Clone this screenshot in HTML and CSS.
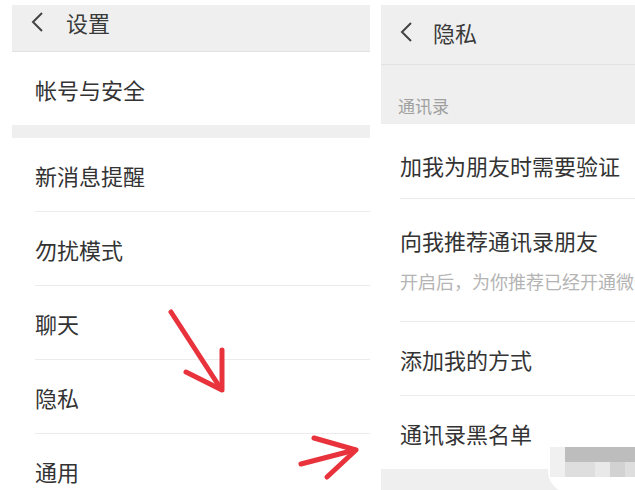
FILE: index.html
```html
<!DOCTYPE html>
<html lang="zh-CN">
  <head>
    <meta charset="UTF-8" />
    <meta name="viewport" content="width=device-width, initial-scale=1.0" />
    <title>设置 / 隐私</title>
    <link rel="stylesheet" href="styles.css">
  </head>
  <body>
    <div class="shot">
      <div class="screen screen-left">
        <div class="topbar">
          <svg class="back" width="14" height="22" viewBox="0 0 14 22"><polyline points="12,2 3,11 12,20" fill="none" stroke="#444" stroke-width="2" /></svg>
          <span>设置</span>
        </div>
        <div class="row">帐号与安全</div>
        <div class="gap"></div>
        <div class="row line">新消息提醒</div>
        <div class="row line">勿扰模式</div>
        <div class="row line">聊天</div>
        <div class="row line">隐私</div>
        <div class="row">通用</div>
      </div>

      <div class="screen screen-right">
        <div class="topbar tall">
          <svg class="back" width="14" height="22" viewBox="0 0 14 22"><polyline points="12,2 3,11 12,20" fill="none" stroke="#444" stroke-width="2" /></svg>
          <span>隐私</span>
        </div>
        <div class="section-title">通讯录</div>
        <div class="row line first">加我为朋友时需要验证</div>
        <div class="row line double">
          <div>向我推荐通讯录朋友</div>
          <div class="hint">开启后，为你推荐已经开通微信的朋友</div>
        </div>
        <div class="row line">添加我的方式</div>
        <div class="row">通讯录黑名单</div>
        <div class="gap"></div>
      </div>

      <!-- red marker arrows drawn over the screenshot -->
      <svg class="marks" width="635" height="490" viewBox="0 0 635 490">
        <g fill="none" stroke="#e8323c" stroke-width="5" stroke-linecap="round" stroke-linejoin="round">
          <line x1="171" y1="312" x2="221" y2="389" />
          <polyline points="222,350 222,390 186,372" />
          <line x1="301" y1="464" x2="355" y2="450" />
          <polyline points="314,438 356,450 327,477" />
        </g>
      </svg>

      <div class="mosaic">
        <span class="m1"></span><span class="m2"></span><span class="m2"></span><span class="m2"></span><span class="m2"></span><span class="m2"></span>
        <span class="m1"></span><span class="m3"></span><span class="m3"></span><span class="m4"></span><span class="m5"></span><span class="m3"></span>
      </div>
    </div>
  </body>
</html>
```

FILE: styles.css
```css
* {
  margin: 0;
  padding: 0;
  box-sizing: border-box;
}
body {
  font-family: "Noto Sans CJK SC", "Noto Sans", sans-serif;
  background: #fff;
  color: #333;
  overflow: hidden;
}
.shot {
  position: relative;
  width: 635px;
  height: 490px;
  display: flex;
  gap: 11px;
  padding: 5px 0 0 12px;
  overflow: hidden;
}
.screen {
  display: flex;
  flex-direction: column;
  background: #fff;
  flex-shrink: 0;
}
.screen > * {
  flex-shrink: 0;
}
.screen-left {
  width: 358px;
}
.screen-right {
  width: 270px;
  white-space: nowrap;
}
.topbar {
  height: 47px;
  background: #efefef;
  border-bottom: 1px solid #e2e2e2;
  display: flex;
  align-items: center;
  padding-left: 18px;
  font-size: 22px;
  padding-bottom: 13px;
  color: #3a3a3a;
}
.topbar.tall {
  height: 60px;
  padding-bottom: 6px;
}
.back {
  margin-right: 22px;
}
.topbar.tall .back {
  margin-right: 20px;
}
.row {
  height: 73px;
  display: flex;
  align-items: center;
  padding-left: 23px;
  font-size: 22px;
  position: relative;
}
.screen-right .row {
  padding-left: 19px;
}
.row.line::after {
  content: "";
  position: absolute;
  left: 23px;
  right: 0;
  bottom: 0;
  height: 1px;
  background: #ececec;
}
.screen-right .row.line::after {
  left: 19px;
}
.row.line {
  height: 74px;
}
.row.first {
  height: 75px;
  padding-top: 6px;
}
.row.double {
  height: 123px;
  flex-direction: column;
  align-items: flex-start;
  justify-content: center;
  gap: 12px;
  padding-bottom: 4px;
}
.hint {
  font-size: 18px;
  color: #b4b4b4;
}
.section-title {
  height: 59px;
  background: #efefef;
  font-size: 17px;
  color: #a0a0a0;
  padding: 28px 0 0 17px;
}
.gap {
  height: 13px;
  background: #efefef;
}
.screen-right .gap {
  height: 30px;
}
.marks {
  position: absolute;
  left: 0;
  top: 0;
  pointer-events: none;
}
.mosaic {
  position: absolute;
  left: 548px;
  top: 438px;
  width: 110px;
  padding: 9px 0 16px 2px;
  background: #fff;
  border-radius: 22px 0 0 22px;
  display: grid;
  grid-template-columns: repeat(6, 15px);
  grid-auto-rows: 15px;
}
.mosaic span {
  display: block;
}
.m1 { background: #f0f0f0; }
.m2 { background: #bdbdbd; }
.m3 { background: #dedede; }
.m4 { background: #e9e9e9; }
.m5 { background: #d2d2d2; }
```
